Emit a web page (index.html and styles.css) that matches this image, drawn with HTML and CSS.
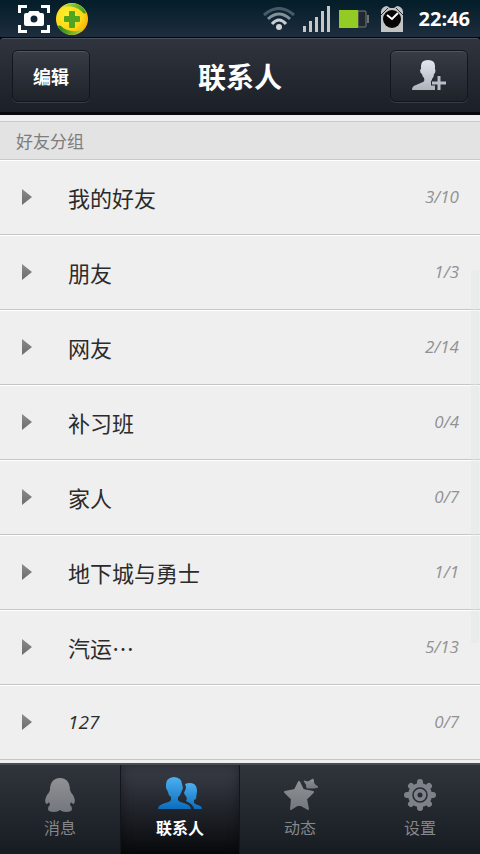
FILE: index.html
```html
<!DOCTYPE html>
<html lang="zh-CN">
<head>
<meta charset="utf-8">
<meta name="viewport" content="width=device-width, initial-scale=1">
<title>联系人</title>
<link rel="stylesheet" href="styles.css">
</head>
<body>
<div class="top">
<div class="status">
  <div class="status-group">
    <svg width="32" height="28" viewBox="0 0 32 28" aria-hidden="true">
      <path d="M1.500 8V1.500H9M23 1.500h7.500V8M30.500 20v6.500H23M9 26.500H1.500V20" fill="none" stroke="#fff" stroke-width="3"/>
      <path fill-rule="evenodd" fill="#fff" d="M8 8h2l1.500-2h9L22 8h2q2 0 2 2v9q0 2-2 2H8q-2 0-2-2v-9q0-2 2-2zM16 10.500a3.500 3.500 0 1 0 0 7a3.500 3.500 0 0 0 0-7z"/>
    </svg>
    <svg width="32" height="32" viewBox="0 0 32 32" aria-hidden="true">
      <defs>
        <radialGradient id="ball" cx=".35" cy=".35" r=".8"><stop offset="0" stop-color="#fff12e"/><stop offset=".6" stop-color="#ffd616"/><stop offset="1" stop-color="#f9a000"/></radialGradient>
        <linearGradient id="leaf-top"><stop stop-color="#d3e84a"/><stop offset="1" stop-color="#3a9a1c"/></linearGradient>
        <linearGradient id="leaf-bottom"><stop stop-color="#23861a"/><stop offset="1" stop-color="#b4dc3c"/></linearGradient>
      </defs>
      <circle cx="16" cy="16" r="16" fill="url(#ball)"/>
      <path d="M5 5C12-2 26-1 30 10q-1 1-3 0C22 4 14 2 5 5z" fill="url(#leaf-top)"/>
      <path d="M28 26C20 35 6 33 2 23q1-1 3 0C10 28 19 30 28 26z" fill="url(#leaf-bottom)"/>
      <path d="M14 8h4q1 0 1 1v4h4q1 0 1 1v4q0 1-1 1h-4v5q0 1-1 1h-4q-1 0-1-1v-5H9q-1 0-1-1v-4q0-1 1-1h4V9q0-1 1-1z" fill="#52a51c"/>
    </svg>
  </div>
  <div class="status-group status-right">
    <svg width="32" height="24" viewBox="0 0 32 24" fill="none" aria-hidden="true">
      <path d="M1 8Q16-5 31 8" stroke="#465b65" stroke-width="3"/>
      <path d="M5 12Q16 2 27 12" stroke="#839097" stroke-width="3"/>
      <path d="M9 17Q16 9 23 17" stroke="#c9cdd1" stroke-width="3"/>
      <circle cx="16" cy="20" r="3" fill="#d0d2d5"/>
    </svg>
    <svg width="28" height="26" viewBox="0 0 28 26" fill="#c5c7c9" aria-hidden="true">
      <path d="M0 20h3v6H0zM6 15h3v11H6zM12 11h3v15h-3zM18 5h3v21h-3zM24 0h3v26h-3z"/>
    </svg>
    <svg width="30" height="18" viewBox="0 0 30 18" aria-hidden="true">
      <path d="M19 1h7q1 0 1 1v14q0 1-1 1h-7z" fill="#22292e" stroke="#777c7e"/>
      <path d="M28 5h2v8h-2z" fill="#6d6f70"/>
      <path d="M0 0h19v18H0z" fill="#92cb24"/>
    </svg>
    <svg class="alarm" width="22" height="26" viewBox="0 0 22 26" aria-hidden="true">
      <path d="M0 26V9Q-1 1 6 0l3 2h4l3-2q7 1 6 9v17z" fill="#c2c3c4"/>
      <path d="M0 9L7 2M22 9l-7-7" stroke="#263139"/>
      <circle cx="11" cy="13" r="9" fill="#050505"/>
      <path d="M6 9l5 4 6-6" fill="none" stroke="#fff" stroke-width="2"/>
    </svg>
    <span class="clock">22:46</span>
  </div>
</div>

<header class="header">
  <button class="bar-btn" type="button">编辑</button>
  <h1>联系人</h1>
  <button class="bar-btn" type="button" aria-label="添加好友">
    <svg width="35" height="31" viewBox="0 0 35 31" aria-hidden="true">
      <defs><linearGradient id="silver" x2="0" y2="1"><stop stop-color="#e4e8ee"/><stop offset="1" stop-color="#adb2bc"/></linearGradient></defs>
      <path fill="url(#silver)" d="M10 6Q10 0 17 0t7 6v3q1 1 0 4l-1 1q0 3-2 5v2q1 3 3 4v5H1q0-4 4-5l7-3q2-1 1-4-2-2-2-4-2-1-2-4l1-1z"/>
      <path d="M28 14v17M20 23h15" stroke="#262a31" stroke-width="5"/>
      <path d="M28 16v14M21 23h14" stroke="#b9bec8" stroke-width="3"/>
    </svg>
  </button>
</header>
</div>

<main class="contacts">
  <h2>好友分组</h2>
  <ul class="groups">
    <li><button type="button"><i class="arrow"></i><span class="name">我的好友</span><span class="count">3/10</span></button></li>
    <li><button type="button"><i class="arrow"></i><span class="name">朋友</span><span class="count">1/3</span></button></li>
    <li><button type="button"><i class="arrow"></i><span class="name">网友</span><span class="count">2/14</span></button></li>
    <li><button type="button"><i class="arrow"></i><span class="name">补习班</span><span class="count">0/4</span></button></li>
    <li><button type="button"><i class="arrow"></i><span class="name">家人</span><span class="count">0/7</span></button></li>
    <li><button type="button"><i class="arrow"></i><span class="name">地下城与勇士</span><span class="count">1/1</span></button></li>
    <li><button type="button"><i class="arrow"></i><span class="name">汽运…</span><span class="count">5/13</span></button></li>
    <li><button type="button"><i class="arrow"></i><span class="name latin">127</span><span class="count">0/7</span></button></li>
  </ul>
  <div class="scrollbar"></div>
</main>

<nav class="tabs">
  <a href="#messages">
    <svg width="36" height="36" viewBox="0 0 36 36" aria-hidden="true">
      <defs><linearGradient id="grey" x2="0" y2="1"><stop stop-color="#8f9195"/><stop offset="1" stop-color="#74777e"/></linearGradient></defs>
      <path fill="url(#grey)" d="M18 1C11 1 8 6 8 13q-1 3-3 5-3 5-1 9 2 0 3-2l1 3q-2 1-2 4t6 3q4 0 6-2 2 2 6 2 6 0 6-3t-2-4l1-3q1 2 3 2 2-4-1-9-2-2-3-5C28 6 25 1 18 1z"/>
    </svg>
    <span>消息</span>
  </a>
  <a href="#contacts" class="active" aria-current="page">
    <svg width="46" height="36" viewBox="0 0 46 36" aria-hidden="true">
      <defs><linearGradient id="blue" x2="0" y2="1"><stop stop-color="#4db0ef"/><stop offset="1" stop-color="#0b6dbd"/></linearGradient></defs>
      <path fill="url(#blue)" d="M28 7q5-2 9 0 3 2 3 7l-1 8-2 1v2q0 2 4 3 4 1 4 4h-8q-1-5-8-8 2-3-1-6l-1-2 2-5q0-2-1-4z"/>
      <path fill="url(#blue)" d="M9 7q0-6 8-7 8 1 8 7l1 4-2 5q-1 3-3 4v3q1 2 6 3 7 2 7 6H1q0-4 7-6 5-1 6-3v-3q-3-2-3-5l-2-4z"/>
    </svg>
    <span>联系人</span>
  </a>
  <a href="#moments">
    <svg width="36" height="36" viewBox="0 0 36 36" aria-hidden="true">
      <path fill="url(#grey)" stroke="url(#grey)" stroke-width="2" stroke-linejoin="round" d="M17 5L21 13L31 15L24 22L26 32L17 27L9 32L10 22L3 15L13 13z"/>
      <path fill="url(#grey)" stroke="url(#grey)" stroke-linejoin="round" d="M22 4l4 1 5-3 1 5 4 3-4 1-7 0q0-4-3-7z"/>
    </svg>
    <span>动态</span>
  </a>
  <a href="#settings">
    <svg width="36" height="36" viewBox="0 0 36 36" aria-hidden="true">
      <g stroke="#7e8188" stroke-width="6" stroke-linecap="round">
        <path d="M18 5v26M5 18h26M9 9l18 18M27 9L9 27"/>
      </g>
      <circle cx="18" cy="18" r="12" fill="#7e8188"/>
      <circle cx="18" cy="18" r="7" fill="none" stroke="#272c34" stroke-width="1.500"/>
      <circle cx="18" cy="18" r="2.500" fill="#272c34"/>
    </svg>
    <span>设置</span>
  </a>
</nav>
</body>
</html>
```

FILE: styles.css
```css
* { box-sizing: border-box; }

body {
  margin: 0;
  min-height: 100vh;
  display: flex;
  flex-direction: column;
  background: #efefef;
  color: #2b2b2b;
  font-family: "Noto Sans CJK SC", sans-serif;
}

h1, h2, ul { margin: 0; padding: 0; }
button { font: inherit; cursor: pointer; }
svg { display: block; }

.top { background: #05070c; }

.status {
  height: 38px;
  display: flex;
  justify-content: space-between;
  align-items: center;
  padding: 0 10px 0 18px;
  background: linear-gradient(#031d29, #1e2d3d);
  border-bottom: 1px solid #05070c;
}
.status-group { display: flex; align-items: center; gap: 6px; }
.status-right { gap: 8px; }
.alarm { margin-left: 4px; }
.clock {
  margin-left: 8px;
  color: #fff;
  font: bold 20px/24px "Open Sans", sans-serif;
}

.header {
  height: 77px;
  display: flex;
  justify-content: space-between;
  align-items: center;
  padding: 0 12px;
  background: linear-gradient(#2f343e, #1b1f26);
  border-top: 1px solid #4a505a;
  border-bottom: 3px solid #07090d;
  border-radius: 4px 4px 0 0;
}
.header h1 {
  color: #fff;
  font-size: 28px;
  line-height: 36px;
  font-weight: 700;
}
.bar-btn {
  width: 78px;
  height: 52px;
  display: flex;
  align-items: center;
  justify-content: center;
  padding: 0;
  color: #fff;
  font-size: 18px;
  font-weight: 700;
  background: linear-gradient(#373c45, #1e2229);
  border: 1px solid #13161b;
  border-radius: 6px;
  box-shadow: inset 0 1px 0 #50555e, 0 1px 0 #363b44;
}

.contacts {
  position: relative;
  flex: 1;
  padding-top: 6px;
}
.contacts h2 {
  height: 39px;
  padding-left: 16px;
  background: #e3e3e3;
  border-top: 1px solid #c9cbc0;
  border-bottom: 1px solid #c9c9c9;
  color: #7d7d7d;
  font-size: 17px;
  line-height: 37px;
  font-weight: 400;
}
.groups { list-style: none; }
.groups button {
  width: 100%;
  height: 75px;
  display: flex;
  align-items: center;
  padding: 0 21px 0 22px;
  background: #efefef;
  border: 0;
  border-bottom: 1px solid #c6c6c6;
  box-shadow: inset 0 1px 0 #fff;
  color: #2b2b2b;
  text-align: left;
}
.arrow {
  width: 10px;
  height: 16px;
  background: linear-gradient(#8b8b8b, #6c6c6c);
  clip-path: polygon(0 0, 100% 50%, 0 100%);
}
.name {
  flex: 1;
  margin-left: 36px;
  font-size: 22px;
  line-height: 30px;
}
.latin { font: italic 19px/30px "Open Sans", sans-serif; }
.count {
  color: #929292;
  font: italic 17px/24px "Open Sans", sans-serif;
}
.scrollbar {
  position: absolute;
  right: 1px;
  top: 155px;
  width: 8px;
  height: 373px;
  background: rgba(222, 236, 232, .4);
}

.tabs {
  height: 91px;
  display: grid;
  grid-template-columns: repeat(4, 1fr);
  background: linear-gradient(#30343b, #171b22);
  border-top: 2px solid #4a4d52;
}
.tabs a {
  display: flex;
  flex-direction: column;
  align-items: center;
  gap: 2px;
  padding-top: 12px;
  color: #85878a;
  font-size: 16px;
  line-height: 24px;
  text-decoration: none;
}
.tabs .active {
  color: #fff;
  font-weight: 700;
  background: linear-gradient(#3a3e48, #07090c);
  border: solid #12151a;
  border-width: 0 1px;
  box-shadow: inset 0 0 12px rgba(0, 0, 0, .4);
}
```
